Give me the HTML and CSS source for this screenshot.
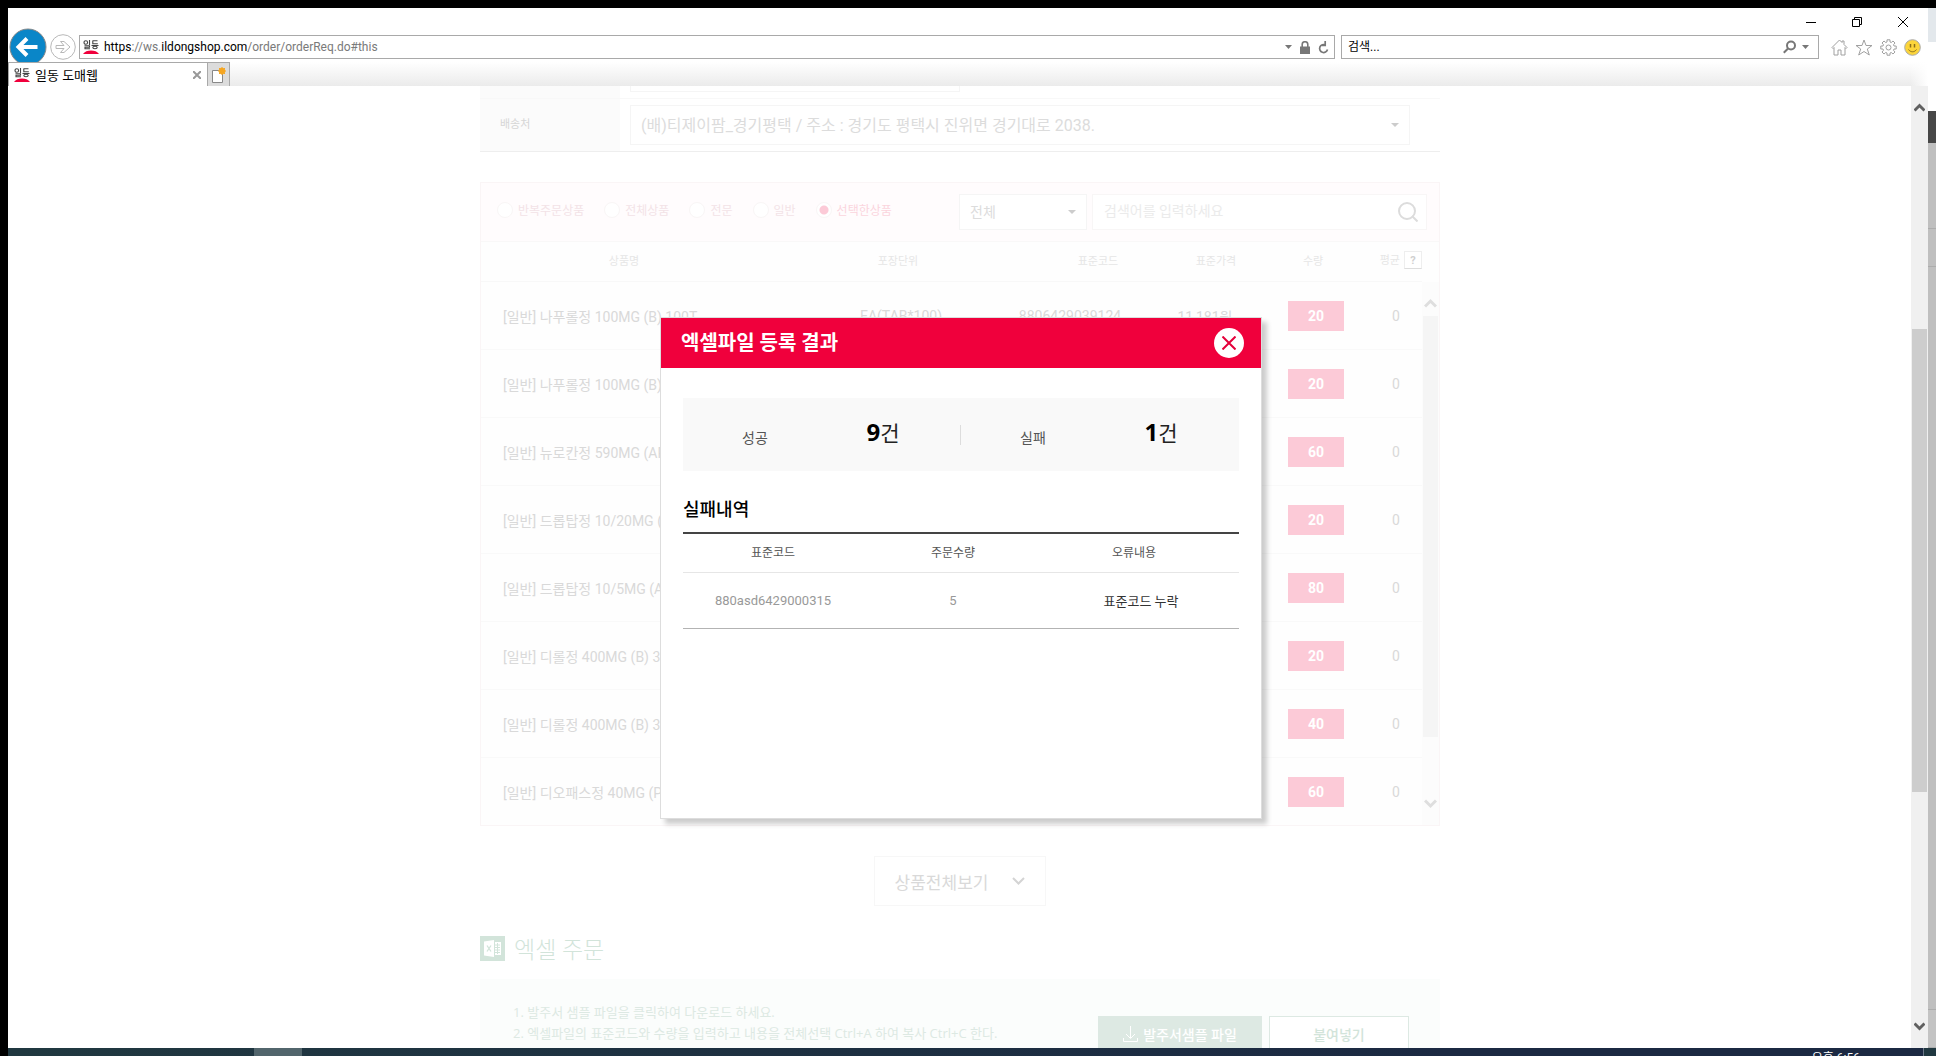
FILE: index.html
```html
<!DOCTYPE html>
<html lang="ko">
<head>
<meta charset="utf-8">
<title>일동 도매웹</title>
<link rel="stylesheet" href="styles.css">
</head>
<body>
<svg class="defs" width="0" height="0" aria-hidden="true">
  <symbol id="favicon" viewBox="0 0 16 14">
    <g fill="none" stroke="#444" stroke-width="1.1">
      <circle cx="2.800" cy="2.500" r="1.800"/><path d="M6.500 0v5M1.500 5.800h5v1.500H2v1.500h5M9.500 .8h5M9.800 .8v3h5M8.500 5.500h7"/><ellipse cx="12" cy="7.500" rx="2.200" ry="1.200"/>
    </g>
    <path d="M0 14c3-4.600 13-4.600 16 0z" fill="#f0003c"/>
  </symbol>
</svg>
<div class="screen">
  <div class="browser">
    <header class="chrome">
      <div class="titlebar">
        <button class="win" aria-label="최소화"><svg width="12" height="12"><path d="M1 6.500h10" stroke="#000"/></svg></button>
        <button class="win" aria-label="이전 크기로 복원"><svg width="12" height="12" fill="none" stroke="#000"><path d="M1.500 3.500h7v7h-7zM3.500 3.500v-2h7v7h-2"/></svg></button>
        <button class="win" aria-label="닫기"><svg width="12" height="12" stroke="#000"><path d="M1 1l10 10M11 1L1 11"/></svg></button>
      </div>
      <div class="navbar">
        <button class="back" aria-label="뒤로"><svg width="38" height="38"><circle cx="19" cy="19" r="18" fill="#0a86c8" stroke="#888"/><path d="M9.500 19h19M18 10.500L9.500 19l8.500 8.500" fill="none" stroke="#fff" stroke-width="4"/></svg></button>
        <button class="forward" aria-label="앞으로"><svg width="26" height="26" fill="none" stroke="#b8b8b8"><circle cx="13" cy="13" r="12.300"/><path d="M6 11.500h8l-3.500-4h3.500l6 5.500-6 5.500h-3.500l3.500-4H6z"/></svg></button>
        <div class="address">
          <svg class="fav" width="16" height="14"><use href="#favicon"/></svg>
          <span class="url">https<i>://ws.</i>ildongshop.com<i>/order/orderReq.do#this</i></span>
          <svg class="tri" width="7" height="4"><path d="M0 0h7L3.500 4z"/></svg>
          <svg width="10" height="13" viewBox="0 0 10 13"><path d="M0 5.500h10V13H0z" fill="#777"/><path d="M2.200 6V3.500a2.800 2.800 0 015.600 0V6" fill="none" stroke="#777" stroke-width="1.600"/></svg>
          <svg width="11" height="13" viewBox="0 0 11 13"><path d="M7.500 4A4 4 0 109.500 8.500M7.200 0v4.500H4" fill="none" stroke="#777" stroke-width="1.700"/></svg>
        </div>
        <div class="find">
          <input class="find-input" type="text" placeholder="검색..." aria-label="검색">
          <svg width="13" height="14" fill="none" stroke="#777" stroke-width="2"><circle cx="8" cy="5.500" r="4"/><path d="M5 8.500L.8 12.800"/></svg>
          <svg class="tri" width="7" height="4"><path d="M0 0h7L3.500 4z"/></svg>
        </div>
        <div class="tools">
          <svg width="17" height="17" viewBox="0 0 17 17" fill="#fff" stroke="#a0a0a0"><path d="M1 8.500L8.500 1l2.500 2.500V2h2v3.500l3 3-1 1-1-1v7.500h-4v-5H7v5H3V8.500l-1 1z"/></svg>
          <svg width="18" height="17" viewBox="0 0 18 17" fill="#fff" stroke="#a0a0a0"><path d="M9 1l2 5.500h6l-4.700 3.500 2 6L9 12.500 3.700 16l2-6L1 6.500h6z"/></svg>
          <svg width="17" height="17" viewBox="0 0 17 17" fill="#fff" stroke="#a0a0a0"><path d="M7 3V.8h3V3l1.300.5L13 2l2 2-1.500 1.700.5 1.300h2.200v3H14l-.5 1.300L15 13l-2 2-1.700-1.500L10 14v2.200H7V14l-1.300-.5L4 15l-2-2 1.500-1.700L3 10H.8V7H3l.5-1.300L2 4l2-2 1.700 1.500z"/><circle cx="8.500" cy="8.500" r="2.500"/></svg>
          <svg width="17" height="17" viewBox="0 0 17 17"><circle cx="8.500" cy="8.500" r="7.800" fill="#fcd53a" stroke="#a9a9a9"/><path d="M6.500 5v3.500M10.500 5v3.500" stroke="#8a6d1a" stroke-width="1.500"/><path d="M4.500 10.500c2 3 6 3 8 0" fill="none" stroke="#8a6d1a"/></svg>
        </div>
      </div>
      <div class="tabs">
        <div class="tab">
          <svg class="fav" width="16" height="14"><use href="#favicon"/></svg>
          <span class="tab-title">일동 도매웹</span>
          <button class="tab-close" aria-label="탭 닫기"><svg width="8" height="8" stroke="#999" stroke-width="2"><path d="M0 0l8 8M8 0L0 8"/></svg></button>
        </div>
        <button class="newtab" aria-label="새 탭"><svg width="16" height="16"><path d="M1.500 3.500h10v12h-10z" fill="#fff" stroke="#888"/><circle cx="11" cy="4" r="3.200" fill="#f5a623"/><path d="M11 0v8M7 4h8M8 1l6 6M14 1L8 7" stroke="#f5a623"/></svg></button>
      </div>
    </header>

    <div class="viewport">
      <main class="page">
        <div class="form">
          <div class="form-row"><div class="form-label"></div><div class="form-field"><input class="field short" type="text" aria-label="거래처"></div></div>
          <div class="form-row"><label class="form-label" for="dest">배송처</label><div class="form-field"><select id="dest" class="field"><option>(배)티제이팜_경기평택 / 주소 : 경기도 평택시 진위면 경기대로 2038.</option></select></div></div>
        </div>

        <section class="goods">
          <div class="filter">
            <div class="radios">
              <label><input type="radio" name="kind">반복주문상품</label>
              <label><input type="radio" name="kind">전체상품</label>
              <label><input type="radio" name="kind">전문</label>
              <label><input type="radio" name="kind">일반</label>
              <label class="on"><input type="radio" name="kind" checked>선택한상품</label>
            </div>
            <select class="scope" aria-label="검색 범위"><option>전체</option></select>
            <div class="search">
              <input type="text" placeholder="검색어를 입력하세요" aria-label="검색어">
              <button aria-label="검색"><svg width="20" height="20" fill="none" stroke="#dcdcdc" stroke-width="2"><circle cx="9" cy="9" r="8"/><path d="M14 14l5.500 5.500"/></svg></button>
            </div>
          </div>
          <div class="list">
            <table class="items">
              <colgroup><col><col class="c-pack"><col class="c-code"><col class="c-price"><col class="c-qty"><col class="c-avg"></colgroup>
              <thead><tr><th>상품명</th><th class="pack">포장단위</th><th class="code">표준코드</th><th class="price">표준가격</th><th class="amount">수량</th><th class="avg">평균<button class="help">?</button></th></tr></thead>
              <tbody>
                <tr><td>[일반] 나푸롤정 100MG (B) 100T</td><td>EA(TAB*100)</td><td>8806429039124</td><td>11,181원</td><td><button class="qty">20</button></td><td>0</td></tr>
                <tr><td>[일반] 나푸롤정 100MG (B) 30T</td><td></td><td></td><td></td><td><button class="qty">20</button></td><td>0</td></tr>
                <tr><td>[일반] 뉴로칸정 590MG (AP)</td><td></td><td></td><td></td><td><button class="qty">60</button></td><td>0</td></tr>
                <tr><td>[일반] 드롭탑정 10/20MG (AP)</td><td></td><td></td><td></td><td><button class="qty">20</button></td><td>0</td></tr>
                <tr><td>[일반] 드롭탑정 10/5MG (AP)</td><td></td><td></td><td></td><td><button class="qty">80</button></td><td>0</td></tr>
                <tr><td>[일반] 디롤정 400MG (B) 300T</td><td></td><td></td><td></td><td><button class="qty">20</button></td><td>0</td></tr>
                <tr><td>[일반] 디롤정 400MG (B) 30T</td><td></td><td></td><td></td><td><button class="qty">40</button></td><td>0</td></tr>
                <tr><td>[일반] 디오패스정 40MG (P)</td><td></td><td></td><td></td><td><button class="qty">60</button></td><td>0</td></tr>
              </tbody>
            </table>
            <div class="list-scroll">
              <svg width="13" height="10" fill="none" stroke="#dedede" stroke-width="3"><path d="M1 8.500L6.500 3 12 8.500"/></svg>
              <div class="list-thumb"></div>
              <svg width="13" height="10" fill="none" stroke="#dedede" stroke-width="3"><path d="M1 1.500L6.500 7 12 1.500"/></svg>
            </div>
          </div>
        </section>

        <button class="more">상품전체보기<svg width="13" height="8" fill="none" stroke="#d4d4d4" stroke-width="2"><path d="M1 1l5.500 5.500L12 1"/></svg></button>

        <h2 class="excel-title">
          <svg width="25" height="25"><path d="M0 0h25v25H0z" fill="#d2e4da"/><path d="M4 5.500L14 4v17L4 19.500zM15 6h6v13h-6z" fill="#fff"/><path d="M7 9.500l4 6M11 9.500l-4 6" stroke="#d2e4da" stroke-width="1.300"/><path d="M15 9h5M15 11.500h5M15 14h5M15 16.500h5M17.500 7v11" stroke="#d2e4da"/></svg>엑셀 주문</h2>
        <section class="excel">
          <ol class="steps">
            <li>발주서 샘플 파일을 클릭하여 다운로드 하세요.</li>
            <li>엑셀파일의 표준코드와 수량을 입력하고 내용을 전체선택 Ctrl+A 하여 복사 Ctrl+C 한다.</li>
          </ol>
          <div class="excel-actions">
            <button class="sample"><svg width="15" height="16" fill="none" stroke="#fff"><path d="M7.500 0v12M3 8l4.500 4.500L12 8M.5 12v3.500h14V12"/></svg>발주서샘플 파일</button>
            <button class="paste">붙여넣기</button>
          </div>
        </section>
      </main>

      <div class="scrollbar">
        <svg width="11" height="9" fill="none" stroke="#606060" stroke-width="3"><path d="M.5 7.500l5-5 5 5"/></svg>
        <div class="thumb"></div>
        <svg width="11" height="9" fill="none" stroke="#606060" stroke-width="3"><path d="M.5 1.500l5 5 5-5"/></svg>
      </div>

      <div class="overlay">
        <div class="modal" role="dialog" aria-labelledby="modal-title">
          <div class="modal-head">
            <h1 id="modal-title">엑셀파일 등록 결과</h1>
            <button class="close" aria-label="닫기"><svg width="14" height="14" stroke="#e4003a" stroke-width="2"><path d="M.5 .5l13 13M13.500 .5l-13 13"/></svg></button>
          </div>
          <div class="modal-body">
            <dl class="summary">
              <div><dt>성공</dt><dd><b>9</b>건</dd></div>
              <div><dt>실패</dt><dd><b>1</b>건</dd></div>
            </dl>
            <h2>실패내역</h2>
            <table class="fails">
              <thead><tr><th>표준코드</th><th>주문수량</th><th class="why">오류내용</th></tr></thead>
              <tbody><tr><td>880asd6429000315</td><td>5</td><td class="reason">표준코드 누락</td></tr></tbody>
            </table>
          </div>
        </div>
      </div>
    </div>
  </div>
  <div class="edge"><i class="e-light"></i><i class="e-white"></i><i class="e-dark"></i><i class="e-gray"></i><i class="e-line"></i><i class="e-rest"></i><i class="e-foot"></i></div>
  <footer class="taskbar"><span class="task"></span><span class="clock">오후 6:56</span><span class="peek"></span></footer>
</div>
</body>
</html>
```
FILE: styles.css
```css
* { box-sizing: border-box; }
body, h1, h2, dl, dd, ol { margin: 0; padding: 0; }
body, button, input, select {
  font-family: Roboto, "Noto Sans CJK KR", sans-serif;
}
button { padding: 0; border: 0; background: none; }
svg { display: block; flex: none; }
.defs { position: absolute; }

.screen {
  height: 100vh;
  display: grid;
  grid-template: minmax(0, 1fr) 8px / minmax(0, 1fr) 8px;
  padding: 8px 0 0 8px;
  background: #000;
  overflow: hidden;
}
.browser { display: flex; flex-direction: column; min-height: 0; background: #fff; }

/* browser chrome */
.chrome { height: 78px; flex: none; overflow: hidden; background: #fff; }
.titlebar { height: 20px; display: flex; justify-content: flex-end; gap: 34px; padding: 8px 19px 0 0; }
.win { width: 12px; height: 12px; }
.navbar { height: 34px; display: flex; align-items: center; padding: 4px 7px 0 1px; overflow: hidden; }
.back { height: 38px; }
.forward { margin: 0 3px; }
.address, .find {
  height: 24px;
  display: flex;
  align-items: center;
  border: 1px solid #a9a9a9;
  background: #fff;
  font-size: 12px;
}
.address { flex: 1; gap: 8px; padding: 0 5px 0 3px; }
.find { flex: 0 1 478px; margin-left: 6px; gap: 6px; padding: 0 9px 0 6px; }
.url { flex: 1; margin-left: -3px; color: #000; }
.url i { font-style: normal; color: #7a7a7a; }
.find-input { flex: 1; border: 0; padding: 0; font-size: 12px; outline: 0; }
.find-input::placeholder { color: #000; }
.tri { fill: #777; }
.tools { display: flex; gap: 7px; padding-left: 12px; }
.tabs {
  height: 24px;
  display: flex;
  background: linear-gradient(to left, #fff, rgba(255, 255, 255, 0) 18px), linear-gradient(#fff, #ebebeb);
}
.tab {
  width: 200px;
  display: flex;
  align-items: center;
  gap: 5px;
  padding: 0 6px 0 5px;
  border: solid #a9a9a9;
  border-width: 1px 1px 0;
  background: #fff;
  font-size: 13px;
}
.tab-title { flex: 1; }
.newtab { width: 22px; padding-left: 3px; background: #dcdcdc; border: solid #a9a9a9; border-width: 1px 1px 0 0; }

/* page viewport */
.viewport { flex: 1; min-height: 0; position: relative; display: flex; overflow: hidden; background: #fff; }
.page { flex: 1; min-width: 0; height: 0; padding-left: 1px; margin-top: -40px; }
.page > * { width: 960px; margin-left: auto; margin-right: auto; }
.scrollbar {
  width: 17px;
  display: flex;
  flex-direction: column;
  align-items: center;
  padding: 17px 1px;
  background: #f0f0f0;
}
.thumb { width: 15px; height: 463px; margin: 217px 0 auto; background: #cdcdcd; }

.form { border-bottom: 1px solid #eee; }
.form-row { display: flex; height: 52px; }
.form-row:first-child { height: 53px; border-bottom: 1px solid #f8f8f8; }
.form-label { width: 140px; padding: 16px 20px; background: #fbfbfb; font-size: 11px; color: #d6d6d6; }
.form-field { flex: 1; padding: 6px 30px 6px 10px; }
.field { width: 100%; height: 40px; border: 1px solid #f5f5f5; background: #fff; }
.short { width: 330px; }
select {
  appearance: none;
  color: #dcdcdc;
  background: #fff url("data:image/svg+xml,%3Csvg xmlns='http://www.w3.org/2000/svg' width='8' height='4'%3E%3Cpath d='M0 0h8L4 4z' fill='%23ccc'/%3E%3C/svg%3E") no-repeat right 10px center;
}
select.field { padding: 0 10px; font-size: 16px; background-image: url("data:image/svg+xml,%3Csvg xmlns='http://www.w3.org/2000/svg' width='8' height='4'%3E%3Cpath d='M0 0h8L4 4z' fill='%23ccc'/%3E%3C/svg%3E"); background-repeat: no-repeat; background-position: right 10px center; }

.goods { margin-top: 30px; border: 1px solid #faf5f6; }
.filter {
  height: 59px;
  display: flex;
  align-items: center;
  padding: 0 12px 0 16px;
  background: #fffcfd;
  border-bottom: 1px solid #f9f8f8;
}
.radios { flex: 1; display: flex; gap: 20px; padding-bottom: 5px; font-size: 12px; color: #f3e3e7; }
.radios label { display: flex; align-items: center; gap: 5px; }
.radios input {
  appearance: none;
  width: 16px;
  height: 16px;
  margin: 0;
  border: 1px solid #f9f6f6;
  border-radius: 50%;
  background: #fff;
}
.radios input:checked { background: radial-gradient(circle, #fccad7 4px, #fff 5px); }
.radios .on { color: #fbd5de; }
.scope { width: 128px; height: 36px; padding: 0 10px; border: 1px solid #f5f5f5; font-size: 14px; }
.search { width: 335px; height: 36px; display: flex; align-items: center; margin-left: 5px; border: 1px solid #f8f6f6; background: #fff; }
.search input { flex: 1; min-width: 0; border: 0; padding: 0 11px 2px; font-size: 14px; background: none; }
.search input::placeholder { color: #ebebeb; }
.search button { padding-right: 8px; }

.list { display: flex; background: #fefefe; }
.items { flex: 1; border-collapse: separate; border-spacing: 0; table-layout: fixed; text-align: center; color: #d9d9d9; }
.c-pack { width: 242px; }
.c-code { width: 122px; }
.c-price { width: 148px; }
.c-qty { width: 74px; }
.c-avg { width: 69px; }
.items th { height: 40px; padding: 0 0 3px; font-size: 11px; font-weight: 400; color: #e6e6e6; border-bottom: 1px solid #f8f8f8; }
.items th.pack { padding-left: 20px; }
.items th.code { padding-left: 56px; }
.items th.price { padding-left: 22px; }
.items th.amount { padding-right: 6px; }
.items th.avg { text-align: right; white-space: nowrap; }
.help { width: 18px; height: 18px; margin-left: 4px; border: 1px solid #eee; border-bottom-color: #ddd; background: #fff; font-size: 11px; font-weight: 700; line-height: 15px; color: #d0d0d0; }
.items td { height: 68px; padding: 0; font-size: 14px; white-space: nowrap; border-bottom: 1px solid #f9f9f9; }
.items tr:last-child td { border-bottom: 0; height: 67px; }
.items td:first-child { padding-left: 22px; text-align: left; }
.items td:nth-child(2) { padding-left: 26px; }
.items td:nth-child(6) { padding-left: 17px; }
.qty { width: 56px; height: 30px; display: block; margin: 0 auto; background: #fccad7; color: #fff; font-size: 14px; font-weight: 700; }
.list-scroll { width: 17px; display: flex; flex-direction: column; align-items: center; margin-top: 40px; padding: 16px 1px; background: #fcfcfc; }
.list-thumb { width: 15px; height: 421px; margin: 8px 0 auto; background: #f5f5f5; }

.more {
  display: flex;
  align-items: center;
  justify-content: center;
  gap: 24px;
  height: 50px;
  margin-top: 30px;
  border: 1px solid #f7f7f7;
  font-size: 17px;
  color: #d9d9d9;
}
.page > .more { width: 172px; }
.excel-title { display: flex; align-items: center; gap: 9px; height: 34px; margin-top: 25px; font-size: 23px; font-weight: 300; color: #d2e4da; }
.excel { display: flex; justify-content: space-between; height: 120px; margin-top: 14px; padding: 23px 31px 0 33px; background: #fbfdfc; }
.steps { list-style-position: inside; font-family: "Open Sans", "Noto Sans CJK KR", sans-serif; font-size: 13px; line-height: 21px; color: #dde9e3; }
.excel-actions { display: flex; gap: 7px; padding-top: 14px; }
.excel-actions button { height: 36px; font-size: 14px; font-weight: 500; }
.sample { width: 164px; display: flex; align-items: center; justify-content: center; gap: 5px; background: #dde9e3; color: #fff; }
.paste { width: 140px; border: 1px solid #dde9e3; background: #fff; color: #d2e4da; }

/* result dialog */
.overlay { position: absolute; inset: 0 17px 0 0; display: grid; place-items: center; padding: 2px 0 0 3px; }
.modal { width: 602px; height: 502px; border: 1px solid #ddd; background: #fff; box-shadow: 5px 5px 5px rgba(0, 0, 0, 0.2); }
.modal-head { height: 50px; display: flex; align-items: center; justify-content: space-between; padding: 0 17px 0 20px; background: #f0003c; }
.modal-head h1 { font-size: 20px; line-height: 28px; color: #fff; }
.close { width: 30px; height: 30px; display: grid; place-items: center; border-radius: 50%; background: #fff; }
.modal-body { padding: 30px 22px; }
.summary { display: flex; height: 73px; background: #f9f9f9; }
.summary div { flex: 1; display: flex; align-items: center; text-align: center; }
.summary dt { width: 144px; padding-top: 4px; font-size: 14px; color: #555; }
.summary dd { width: 112px; font-size: 21px; line-height: 30px; padding-bottom: 2px; color: #222; }
.summary b { font-family: "Open Sans", sans-serif; font-size: 24px; line-height: 28px; color: #000; }
.summary div:first-child { background: linear-gradient(#ddd, #ddd) no-repeat right center / 1px 20px; }
.modal-body h2 { height: 61px; padding-top: 26px; font-size: 18px; line-height: 26px; font-weight: 500; color: #000; }
.fails { width: 100%; border-collapse: separate; border-spacing: 0; table-layout: fixed; border-top: 2px solid #444; text-align: center; }
.fails th { width: 180px; height: 39px; padding: 0 0 4px; border-bottom: 1px solid #e6e6e6; font-size: 12px; font-weight: 400; color: #555; }
.fails th.why { width: auto; padding-right: 14px; }
.fails td { height: 56px; padding: 0; border-bottom: 1px solid #b3b3b3; font-size: 13px; color: #999; }
.fails td.reason { color: #333; }

/* what shows around the browser window */
.edge { display: flex; flex-direction: column; }
.e-light { height: 34px; background: #e3e8ec; }
.e-white { height: 69px; background: #fff; }
.e-dark { height: 32px; background: #474747; }
.e-gray { height: 85px; background: #bfbfbf; }
.e-line { height: 39px; border: solid #acacac; border-width: 1px 0; background: #bfbfbf; }
.e-rest { flex: 1; background: #bfbfbf; }
.e-foot { height: 39px; border: solid #acacac; border-width: 1px 0; background: #c3c3c3; }
.taskbar { grid-column: 1 / -1; display: flex; overflow: hidden; background: linear-gradient(to right, #203840, #1b2942 75%); }
.task { width: 48px; margin-left: 246px; background: #52656c; }
.clock { margin-left: auto; padding-top: 2px; margin-right: 63px; font-size: 12px; line-height: 16px; color: #fff; }
.peek { width: 13px; border-left: 1px solid #6b7788; background: #203840; }
```
